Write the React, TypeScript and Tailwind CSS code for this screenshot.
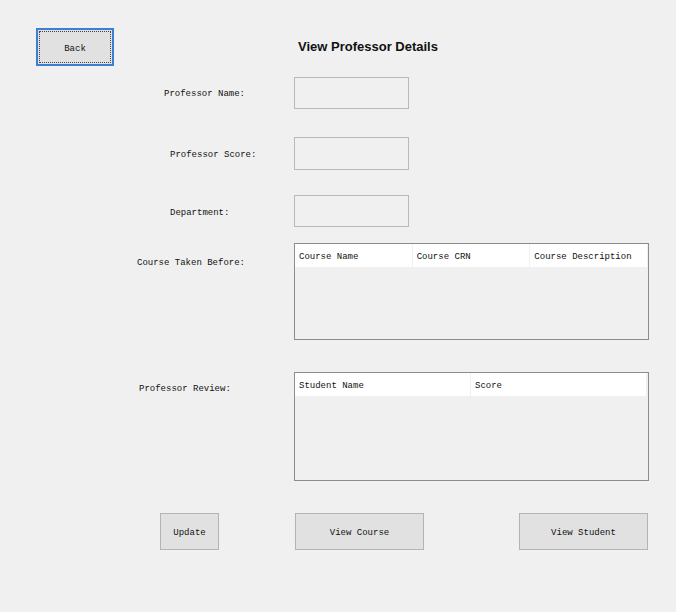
const mono = "font-['Liberation_Mono',monospace] text-[9px] leading-[12px] text-[#111]";

function Label({ text, pad, top }: { text: string; pad: string; top: string }) {
  return (
    <div className={`w-[294px] shrink-0 ${pad} ${top} ${mono}`}>
      <span className="whitespace-pre">{text}</span>
    </div>
  );
}

function TextBox() {
  return <div className="h-full w-[115px] border border-[#b9b9b9] bg-[#f0f0f0]" />;
}

function ListView({ cols, colW, h }: { cols: string[]; colW: string; h: string }) {
  return (
    <div className={`${h} w-[355px] border border-[#8c8c8c] bg-[#f0f0f0]`}>
      <div className="flex h-[23px]">
        {cols.map((c) => (
          <div
            key={c}
            className={`${colW} mr-px flex items-center bg-white pl-[4px] pt-[3px] ${mono}`}
          >
            <span className="whitespace-pre">{c}</span>
          </div>
        ))}
      </div>
    </div>
  );
}

function Btn({ text, w }: { text: string; w: string }) {
  return (
    <button
      className={`${w} h-[37px] border border-[#b4b4b4] bg-[#e1e1e1] pt-[3px] ${mono}`}
    >
      {text}
    </button>
  );
}

export default function App() {
  return (
    <div className="h-[612px] w-[676px] bg-[#f0f0f0] pt-[28px]">
      <div className="flex h-[38px] items-center">
        <div className="ml-[36px] h-[38px] w-[78px] border-2 border-[#3b7fd0] bg-[#e1e1e1] p-px">
          <div className={`flex h-full w-full items-center justify-center border border-dotted border-[#444] pt-[3px] ${mono}`}>
            Back
          </div>
        </div>
        <div className="ml-[184px] font-['Liberation_Sans',Arial,sans-serif] text-[13px] font-bold text-[#111]">
          View Professor Details
        </div>
      </div>

      <div className="mt-[11px] flex h-[32px] items-center">
        <Label text="Professor Name:" pad="pl-[164px]" top="pt-[2px]" />
        <TextBox />
      </div>

      <div className="mt-[28px] flex h-[33px] items-center">
        <Label text="Professor Score:" pad="pl-[170px]" top="pt-[3px]" />
        <TextBox />
      </div>

      <div className="mt-[25px] flex h-[32px] items-center">
        <Label text="Department:" pad="pl-[170px]" top="pt-[3px]" />
        <TextBox />
      </div>

      <div className="mt-[16px] flex">
        <Label text="Course Taken Before:" pad="pl-[137px]" top="pt-[14px]" />
        <ListView
          cols={["Course Name", "Course CRN", "Course Description"]}
          colW="w-[117px]"
          h="h-[97px]"
        />
      </div>

      <div className="mt-[32px] flex">
        <Label text="Professor Review:" pad="pl-[139px]" top="pt-[11px]" />
        <ListView cols={["Student Name", "Score"]} colW="w-[175px]" h="h-[109px]" />
      </div>

      <div className="mt-[32px] flex">
        <div className="ml-[160px]">
          <Btn text="Update" w="w-[59px]" />
        </div>
        <div className="ml-[76px]">
          <Btn text="View Course" w="w-[129px]" />
        </div>
        <div className="ml-[95px]">
          <Btn text="View Student" w="w-[129px]" />
        </div>
      </div>
    </div>
  );
}
